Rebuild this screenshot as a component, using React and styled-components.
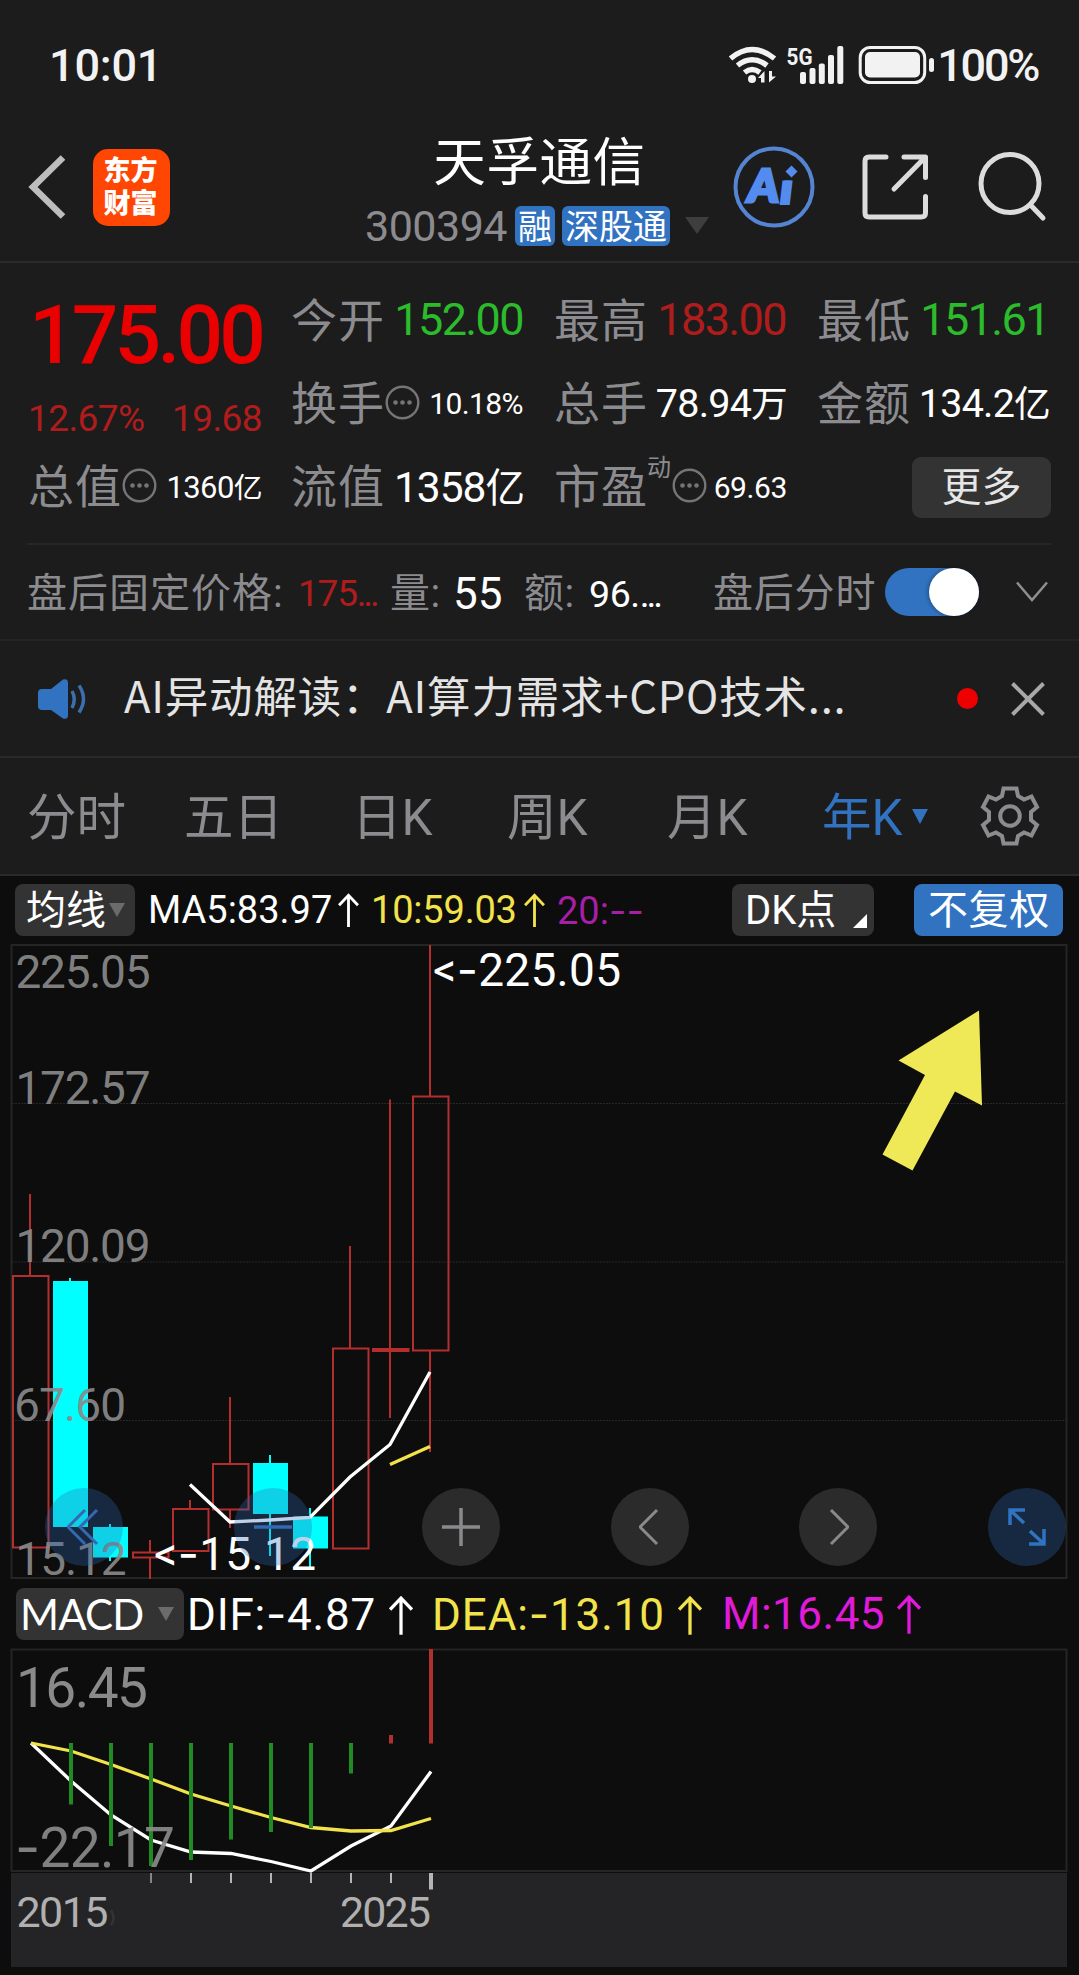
import React from "react";
import styled, { createGlobalStyle, css } from "styled-components";

const NUM = `Roboto, "Noto Sans CJK SC", sans-serif`;
const CJK = `"Noto Sans CJK SC", sans-serif`;
const GREY = "#8c8c90";
const RED = "#b01c1c";
const GREEN = "#2bbb2b";
const BLUE = "#3173c1";
const YELLOW = "#f2e34c";

const Global = createGlobalStyle`
  * { box-sizing: border-box; }
  body { margin: 0; background: #0d0d0d; }
`;

const Page = styled.main`
  width: 1079px;
  height: 1975px;
  overflow: hidden;
  background: #0d0d0d;
  font-family: ${NUM};
  color: #fff;
  white-space: nowrap;
`;

const Top = styled.div`
  background: #1c1c1c;
`;

/* ---------- status bar ---------- */
const StatusBar = styled.header`
  height: 130px;
  padding: 0 41px 0 49px;
  display: flex;
  align-items: center;
  justify-content: space-between;
  color: #f2f2f2;
`;
const StatusText = styled.span`
  font-size: 45px;
  line-height: 60px;
  margin-top: 2px;
  font-weight: 500;
  letter-spacing: ${(p) => p.$track}px;
`;
const StatusRight = styled.div`
  display: flex;
  align-items: center;
`;

/* ---------- title bar ---------- */
const TitleBar = styled.div`
  height: 133px;
  display: grid;
  grid-template-columns: 349px 381px 1fr;
  align-items: start;
  border-bottom: 2px solid #2a2a2b;
`;
const TitleSide = styled.div`
  height: 114px;
  display: flex;
  align-items: center;
  padding-left: ${(p) => p.$pad}px;
  gap: ${(p) => p.$gap}px;
`;
const AppLogo = styled.div`
  width: 77px;
  height: 77px;
  border-radius: 15px;
  background: #ff4602;
  font: 900 27px/33px ${CJK};
  padding: 3px 2px 0 0;
  text-align: center;
`;
const TitleCentre = styled.div`
  display: flex;
  flex-direction: column;
  align-items: center;
`;
const StockName = styled.h1`
  margin: 0;
  height: 62px;
  font: 400 52.5px/57px ${CJK};
  letter-spacing: 0.6px;
`;
const CodeRow = styled.div`
  height: 67px;
  display: flex;
  align-items: center;
  gap: 7px;
  margin-right: 5px;
`;
const Code = styled.span`
  font-size: 43px;
  line-height: 50px;
  color: ${GREY};
  letter-spacing: -0.5px;
  margin-right: 1px;
`;
const Tag = styled.span`
  height: 40px;
  padding: 0 3px;
  border-radius: 6px;
  background: ${BLUE};
  font: 400 34px/37px ${CJK};
`;
const Triangle = styled.i`
  width: 0;
  height: 0;
  border: solid transparent;
  border-width: ${(p) => p.$h}px ${(p) => p.$w / 2}px 0;
  border-top-color: ${(p) => p.$color};
  margin: ${(p) => p.$margin || 0};
`;

/* ---------- quote block ---------- */
const Quote = styled.section`
  height: 282px;
  margin: 0 27px;
  padding: 15px 0 0 1px;
  border-bottom: 2px solid #262627;
  display: grid;
  grid-template-columns: repeat(4, 235px);
  grid-template-rows: repeat(3, 83px);
  column-gap: 28px;
`;
const PriceBox = styled.div`
  grid-row: span 2;
  display: flex;
  flex-direction: column;
`;
const Price = styled.div`
  font-size: 82px;
  font-weight: 500;
  line-height: 100px;
  height: 100px;
  margin: 7px 0 0 1px;
  letter-spacing: -3.8px;
  color: #e90000;
`;
const Change = styled.div`
  display: flex;
  justify-content: space-between;
  font-size: 37px;
  line-height: 60px;
  margin-top: 4px;
  padding: 0 1px 0 0;
  letter-spacing: -0.6px;
  color: ${RED};
`;
const Cell = styled.div`
  display: flex;
  align-items: center;
  min-width: 0;
`;
const Label = styled.span`
  width: 93px;
  flex: none;
  font-size: 46px;
  line-height: 60px;
  margin-top: 2px;
  letter-spacing: 1px;
  color: ${GREY};
`;
const Sup = styled.span`
  font-size: 24px;
  line-height: 24px;
  color: ${GREY};
  margin: 0 0 35px 0;
`;
const Value = styled.span`
  margin: ${(p) => p.$drop || 0}px ${(p) => p.$inset ?? 1}px 0 auto;
  font-size: ${(p) => p.$size || 45}px;
  line-height: 60px;
  letter-spacing: ${(p) => p.$track ?? -1.6}px;
  color: ${(p) => p.$color || "#fff"};
`;
const Unit = styled.span`
  font-size: 0.93em;
`;
const MoreButton = styled.button`
  margin: 3px 1px 0 auto;
  width: 139px;
  height: 61px;
  border: 0;
  padding: 0 0 7px;
  border-radius: 9px;
  background: #333333;
  color: #e6e6e6;
  font: 400 40px/50px ${CJK};
`;

/* ---------- after hours ---------- */
const AfterHours = styled.section`
  height: 96px;
  padding: 0 31px 0 27px;
  display: flex;
  align-items: center;
  border-bottom: 2px solid #232324;
`;
const AhText = styled.span`
  width: ${(p) => p.$w}px;
  font-size: ${(p) => p.$size || 40}px;
  line-height: 60px;
  margin-top: 3px;
  letter-spacing: ${(p) => p.$track || 0}px;
  color: ${(p) => p.$color || GREY};
`;
const Ellipsis = styled.span`
  letter-spacing: -3.2px;
`;
const Toggle = styled.div`
  width: 94px;
  height: 48px;
  border-radius: 24px;
  background: ${BLUE};
  display: flex;
  justify-content: flex-end;
  align-items: center;
  margin-right: 37px;
`;
const Knob = styled.div`
  width: 50px;
  height: 48px;
  border-radius: 50%;
  background: #fff;
  box-shadow: -1px 0 4px rgba(0, 0, 0, 0.35);
`;

/* ---------- news ---------- */
const News = styled.section`
  height: 117px;
  padding: 0 34px 0 37px;
  display: flex;
  align-items: center;
  border-bottom: 2px solid #2a2a2b;
`;
const Headline = styled.span`
  margin: -8px auto 0 37px;
  font: 400 43.5px/60px ${CJK};
  letter-spacing: 0.8px;
  color: #e4e4e4;
`;
const Dot = styled.i`
  width: 21px;
  height: 21px;
  border-radius: 50%;
  background: #ee0000;
  margin-right: 33px;
`;

/* ---------- period tabs ---------- */
const Tabs = styled.nav`
  height: 118px;
  padding: 0 39px 0 27px;
  display: flex;
  align-items: center;
  border-bottom: 2px solid #2a2a2b;
`;
const Tab = styled.a`
  width: ${(p) => p.$w}px;
  display: flex;
  align-items: center;
  font-size: 49.5px;
  line-height: 60px;
  padding-top: 4px;
  color: ${(p) => (p.$active ? BLUE : GREY)};
`;

/* ---------- indicator rows ---------- */
const IndicatorRow = styled.div`
  height: ${(p) => p.$h}px;
  padding: ${(p) => p.$pad};
  display: flex;
  align-items: flex-start;
`;
const chip = css`
  display: flex;
  align-items: center;
  border-radius: 8px;
  flex: none;
`;
const Chip = styled.div`
  ${chip}
  width: ${(p) => p.$w}px;
  height: 52px;
  padding: 0 0 0 ${(p) => p.$pad}px;
  background: ${(p) => (p.$active ? BLUE : "#333333")};
  font-size: ${(p) => p.$size || 40}px;
  line-height: 51px;
  font-family: ${(p) => p.$font || NUM};
  letter-spacing: ${(p) => p.$track || 0}px;
  margin-left: ${(p) => p.$left || 0}px;
`;
const Corner = styled.i`
  width: 0;
  height: 0;
  border: solid transparent;
  border-width: 0 0 14px 14px;
  border-bottom-color: #fff;
  margin: 22px 0 0 auto;
`;
const Reading = styled.span`
  width: ${(p) => p.$w}px;
  flex: none;
  display: flex;
  align-items: center;
  justify-content: space-between;
  font-size: ${(p) => p.$size}px;
  line-height: 52px;
  letter-spacing: ${(p) => p.$track || 0}px;
  color: ${(p) => p.$color};
  margin-left: ${(p) => p.$left}px;
`;
const Dash = styled.span`
  font-family: Inter, sans-serif;
`;

/* ---------- charts ---------- */
const ChartBox = styled.section`
  position: relative;
  height: ${(p) => p.$h}px;
  svg {
    display: block;
  }
`;
const Controls = styled.div`
  position: absolute;
  left: 45px;
  right: 13px;
  bottom: 14px;
  display: flex;
  justify-content: space-between;
`;
const Round = styled.button`
  width: 78px;
  height: 78px;
  border: 0;
  padding: 0;
  border-radius: 50%;
  display: grid;
  place-items: center;
  background: ${(p) => (p.$blue ? "rgba(45,106,181,0.31)" : "#2b2b2b")};
`;
const AxisText = styled.text`
  font-family: ${NUM};
  font-size: ${(p) => p.$size || 46}px;
  fill: ${(p) => p.$fill || "#8a8a8a"};
`;
const DashSpan = styled.tspan`
  font-family: Inter, sans-serif;
`;

const CircleDots = () => (
  <svg width="36" height="36" viewBox="0 0 36 36" style={{ flex: "none" }}>
    <circle cx="18.500" cy="17.500" r="15.800" fill="none" stroke="#757578" strokeWidth="2.400" />
    {[11.5, 18.5, 25.5].map((x) => (
      <circle key={x} cx={x} cy="17.500" r="2.300" fill="#757578" />
    ))}
  </svg>
);

const UpArrow = ({ w, h }) => (
  <svg width={w} height={h} viewBox="0 0 22 36" fill="none" stroke="currentColor" strokeWidth="3">
    <path d="M11 36V3M1 13L11 2.500L21 13" />
  </svg>
);

const candles = [
  { x: 30, o: 1276, c: 1547.5, hi: 1194, lo: 1547, up: true },
  { x: 70, o: 1281, c: 1527, hi: 1278, lo: 1527 },
  { x: 110, o: 1527, c: 1557.5, hi: 1524, lo: 1561 },
  { x: 150, o: 1552.5, c: 1557.5, hi: 1540, lo: 1579, up: true },
  { x: 190, o: 1509, c: 1551, hi: 1500, lo: 1551, up: true },
  { x: 230, o: 1464, c: 1509.5, hi: 1397, lo: 1528, up: true },
  { x: 270, o: 1463, c: 1514, hi: 1455, lo: 1556 },
  { x: 310, o: 1516.5, c: 1548.5, hi: 1508, lo: 1568 },
  { x: 350, o: 1348.5, c: 1548.5, hi: 1246, lo: 1548, up: true },
  { x: 390, o: 1349, c: 1351, hi: 1099.5, lo: 1418, up: true },
  { x: 430, o: 1096.5, c: 1350.5, hi: 945, lo: 1452, up: true },
];

const Candle = ({ x, o, c, hi, lo, up }) =>
  up ? (
    <g stroke="#b52e2e" strokeWidth="2" fill="none">
      <path d={`M${x} ${hi}V${o}M${x} ${c}V${lo}`} />
      <rect x={x - 17} y={o} width="35.500" height={c - o} />
    </g>
  ) : (
    <g fill="#00ffff">
      <rect x={x - 1} y={hi} width="2" height={lo - hi} />
      <rect x={x - 17} y={o} width="35" height={c - o} />
    </g>
  );

const priceLabels = [
  ["225.05", 15.5, 988, 135],
  ["172.57", 15.5, 1103.5, 135],
  ["120.09", 15.5, 1262, 135],
  ["67.60", 14, 1421, 112],
  ["15.12", 15.5, 1574.5, 111],
];

const PriceChart = () => (
  <svg width="1079" height="640" viewBox="0 940 1079 640">
    <rect x="11.500" y="945" width="1055" height="633" fill="none" stroke="#252526" strokeWidth="2" />
    {[1103.5, 1262, 1420.5].map((y) => (
      <path key={y} d={`M12 ${y}H1066`} stroke="#272728" strokeWidth="1.200" strokeDasharray="2 1" />
    ))}
    {candles.map((k) => (
      <Candle key={k.x} {...k} />
    ))}
    <g fill="none" strokeWidth="3.300">
      <polyline stroke="#fff" points="190,1484.5 230,1522 270,1520 310,1517.5 350,1477 390,1444.5 430,1372" />
      <polyline stroke={YELLOW} points="390,1464.5 430,1446.5" />
    </g>
    {priceLabels.map(([t, x, y, w]) => (
      <AxisText key={t} x={x} y={y} textLength={w} fillOpacity="0.93">
        {t}
      </AxisText>
    ))}
    <AxisText x="433" y="986" $fill="#fff" textLength="188">{"<"}<DashSpan>-</DashSpan>225.05</AxisText>
    <AxisText x="154" y="1569.500" $fill="#fff" textLength="162">{"<"}<DashSpan>-</DashSpan>15.12</AxisText>
    <path d="M979 1010.500L982 1105.500L955 1091.500L912.500 1170.500L882.500 1154.500L925 1075L898.500 1060.500Z" fill="#efe957" />
  </svg>
);

const histogram = [
  [71, 1804.5], [111, 1846], [151, 1866], [191, 1860], [231, 1839.5],
  [271, 1832], [311, 1828], [351, 1773.5],
];

const MacdChart = () => (
  <svg width="1079" height="331" viewBox="0 1644 1079 331">
    <rect x="11.500" y="1649.500" width="1055" height="221.500" fill="none" stroke="#252526" strokeWidth="2" />
    <rect x="11" y="1873" width="1056" height="94" fill="#242426" />
    <AxisText x="16" y="1707" $size="55" textLength="132">16.45</AxisText>
    <g fill="none" strokeWidth="3.300">
      <polyline
        stroke="#fff"
        points="31,1743 71,1781 111,1815 151,1840 191,1852 231,1853.5 271,1861.5 311,1871 351,1846 391,1826 431,1771.5"
      />
      <polyline
        stroke={YELLOW}
        points="31,1743 71,1751 111,1764.5 151,1779 191,1794 231,1806 271,1817.5 311,1827.5 351,1831 391,1830.5 431,1818.5"
      />
    </g>
    {histogram.map(([x, y]) => (
      <rect key={x} x={x - 2} y="1743" width="4" height={y - 1743} fill="#228a22" />
    ))}
    <AxisText x="15" y="1867" $size="55" textLength="160" fillOpacity="0.93"><DashSpan>-</DashSpan>22.17</AxisText>
    <rect x="389" y="1735" width="4" height="8.500" fill="#b03030" />
    <rect x="429" y="1649" width="4" height="94.500" fill="#b03030" />
    {[151, 191, 231, 271, 311, 351, 391].map((x) => (
      <rect key={x} x={x - 1} y="1873" width="2" height="10" fill={x === 151 ? "#858587" : "#b4b4b4"} />
    ))}
    <rect x="429" y="1873" width="4" height="16.500" fill="#b4b4b4" />
    <AxisText x="16.500" y="1927" $size="43" $fill="#b0b0b0" textLength="92">2015</AxisText>
    <AxisText x="340" y="1927" $size="43" $fill="#b0b0b0" textLength="91">2025</AxisText>
    <path d="M111 1910q5 8 0 15" fill="none" stroke="#333335" strokeWidth="2.500" />
  </svg>
);

export default function App() {
  return (
    <Page>
      <Global />
      <Top>
        <StatusBar>
          <StatusText $track={-0.2}>10:01</StatusText>
          <StatusRight>
            <svg width="208" height="44" viewBox="729 43 208 44">
              <g fill="none" stroke="#f2f2f2" strokeWidth="5.400">
                <path d="M730.500 58.500Q752 40.500 774.500 58.500" />
                <path d="M737.500 65.500Q752 54 767 65.500" />
                <path d="M744.500 72.500Q752 66.500 760 72.500" />
              </g>
              <circle cx="752" cy="79" r="4" fill="#f2f2f2" />
              <path d="M764.500 71V82.500H761V78H758ZM769 71V82.500L776 76.500H772V71Z" fill="#f2f2f2" />
              <text x="786.500" y="65" fontSize="24" fontWeight="700" textLength="26" lengthAdjust="spacingAndGlyphs" fill="#f2f2f2" fontFamily="Roboto, sans-serif">5G</text>
              {[[800, 72], [809.5, 68], [818.8, 63.5], [828, 55], [837.3, 46]].map(([x, y]) => (
                <rect key={x} x={x} y={y} width="6" height={84 - y} rx="2" fill="#f2f2f2" />
              ))}
              <rect x="860.200" y="47.500" width="64.500" height="35" rx="10" fill="none" stroke="#f2f2f2" strokeWidth="3" />
              <rect x="865" y="52" width="55" height="25.500" rx="5" fill="#f2f2f2" />
              <rect x="929" y="58" width="5" height="14" rx="2.500" fill="#f2f2f2" />
            </svg>
            <StatusText $track={-2.3}>100%</StatusText>
          </StatusRight>
        </StatusBar>

        <TitleBar>
          <TitleSide $pad={28} $gap={27}>
            <svg width="38" height="66" viewBox="0 0 38 66" fill="none" stroke="#bdbdbd" strokeWidth="6.500">
              <path d="M35 3.500L5 33L35 62.500" />
            </svg>
            <AppLogo>东方<br />财富</AppLogo>
          </TitleSide>
          <TitleCentre>
            <StockName>天孚通信</StockName>
            <CodeRow>
              <Code>300394</Code>
              <Tag>融</Tag>
              <Tag>深股通</Tag>
              <Triangle $w={25} $h={17} $color="#3e3e3e" $margin="0 0 0 8px" />
            </CodeRow>
          </TitleCentre>
          <TitleSide $pad={2} $gap={0}>
            <svg width="318" height="84" viewBox="732 145.500 318 84">
              <defs>
                <clipPath id="stem"><rect x="776" y="181" width="30" height="30" /></clipPath>
              </defs>
              <circle cx="774" cy="187.500" r="38.500" fill="none" stroke="#5585d2" strokeWidth="4" />
              <g fill="#548bee" stroke="#548bee" fontFamily="Lato, sans-serif" fontWeight="900" fontStyle="italic">
                <text x="748" y="202" fontSize="45" textLength="31" lengthAdjust="spacingAndGlyphs" strokeWidth="3">A</text>
                <text x="781" y="203" fontSize="44" clipPath="url(#stem)" strokeWidth="4">i</text>
                <path d="M791.500 166L797.500 172L791.500 178L785.500 172Z" stroke="none" />
              </g>
              <g fill="none" stroke="#dcdcdc" strokeWidth="5" strokeLinecap="round" strokeLinejoin="round">
                <path d="M886 157.500H869Q865 157.500 865 161.500V213.500Q865 217.500 869 217.500H921Q925.500 217.500 925.500 213.500V197" />
                <path d="M904 157.500H925.500V178M925 158L894 189.500" />
                <circle cx="1010" cy="184" r="29" />
                <path d="M1030.500 205.500L1043 218.500" />
              </g>
            </svg>
          </TitleSide>
        </TitleBar>

        <Quote>
          <PriceBox>
            <Price>175.00</Price>
            <Change><span>12.67%</span><span>19.68</span></Change>
          </PriceBox>
          <Cell><Label>今开</Label><Value $color={GREEN} $inset={3}>152.00</Value></Cell>
          <Cell><Label>最高</Label><Value $color={RED} $inset={3}>183.00</Value></Cell>
          <Cell><Label>最低</Label><Value $color={GREEN} $inset={3}>151.61</Value></Cell>
          <Cell><Label>换手</Label><CircleDots /><Value $size={30} $track={-0.6} $inset={3} $drop={3}>10.18%</Value></Cell>
          <Cell><Label>总手</Label><Value $size={39.5} $track={-0.8} $inset={2} $drop={4}>78.94<Unit>万</Unit></Value></Cell>
          <Cell><Label>金额</Label><Value $size={39.5} $track={-0.8} $inset={2} $drop={4}>134.2<Unit>亿</Unit></Value></Cell>
          <Cell><Label>总值</Label><CircleDots /><Value $size={31} $track={-0.6} $drop={5}>1360<Unit>亿</Unit></Value></Cell>
          <Cell><Label>流值</Label><Value $size={42.5} $track={-1} $drop={5} $inset={2}>1358<Unit>亿</Unit></Value></Cell>
          <Cell><Label>市盈</Label><Sup>动</Sup><CircleDots /><Value $size={30} $track={-0.4} $drop={5} $inset={2}>69.63</Value></Cell>
          <Cell><MoreButton>更多</MoreButton></Cell>
        </Quote>

        <AfterHours>
          <AhText $w={271} $track={1}>盘后固定价格:</AhText>
          <AhText $w={92} $color={RED} $size={37} $track={-1.2}>175<Ellipsis>...</Ellipsis></AhText>
          <AhText $w={63} $track={0.6}>量:</AhText>
          <AhText $w={71} $color="#fff" $size={44}>55</AhText>
          <AhText $w={65} $track={0.6}>额:</AhText>
          <AhText $w={124} $color="#fff" $size={37.5} $track={-0.4}>96.<Ellipsis>...</Ellipsis></AhText>
          <AhText $w={172} $track={0.8}>盘后分时</AhText>
          <Toggle><Knob /></Toggle>
          <svg width="32" height="22" viewBox="0 0 32 22" fill="none" stroke="#8f8f92" strokeWidth="2.500">
            <path d="M1 1.500L16 19L31 1.500" />
          </svg>
        </AfterHours>

        <News>
          <svg width="50" height="40" viewBox="0 0 50 40">
            <path d="M5 10H14L26 0.500Q31 -1 31 4V36Q31 41 26 39.500L14 31H5Q1 31 1 27V14Q1 10 5 10Z" fill={BLUE} />
            <path d="M35 12Q39.500 20 35 29M42 6.500Q51 20 42 33.500" fill="none" stroke="#3a6fb0" strokeWidth="3.500" />
          </svg>
          <Headline>AI异动解读：AI算力需求+CPO技术...</Headline>
          <Dot />
          <svg width="34" height="34" viewBox="0 0 34 34" fill="none" stroke="#a8a8a8" strokeWidth="4">
            <path d="M1.500 1.500L32.500 32.500M32.500 1.500L1.500 32.500" />
          </svg>
        </News>

        <Tabs>
          <Tab $w={157}>分时</Tab>
          <Tab $w={168}>五日</Tab>
          <Tab $w={155}>日K</Tab>
          <Tab $w={160}>周K</Tab>
          <Tab $w={155}>月K</Tab>
          <Tab $w={158} $active>年K<Triangle $w={17} $h={15} $color={BLUE} $margin="0 0 4px 9px" /></Tab>
          <svg width="60" height="60" viewBox="-30 -30 60 60" fill="none" stroke={GREY} strokeWidth="4" strokeLinejoin="miter">
            <path d="M-6.500 -27.500H6.500L8 -20L14 -16.500L21.500 -19.500L27 -9L21 -4V4L27 9L21.500 19.500L14 16.500L8 20L6.500 27.500H-6.500L-8 20L-14 16.500L-21.500 19.500L-27 9L-21 4V-4L-27 -9L-21.500 -19.500L-14 -16.500L-8 -20Z" />
            <circle r="9.800" />
          </svg>
        </Tabs>
      </Top>

      <IndicatorRow $h={64} $pad="8px 16px 0 15px">
        <Chip $w={120} $pad={11}>均线<Triangle $w={16} $h={14} $color="#6b6b6b" $margin="0 0 0 3px" /></Chip>
        <Reading $w={211} $size={38} $color="#fff" $left={13}>MA5:83.97<UpArrow w={21} h={34} /></Reading>
        <Reading $w={174} $size={38} $color={YELLOW} $left={12} $track={-0.2}>10:59.03<UpArrow w={21} h={34} /></Reading>
        <Reading $w={90} $size={38} $color="#a61fa6" $left={12}><span>20:<Dash>--</Dash></span></Reading>
        <Chip $w={142} $pad={13} $left={85}>DK点<Corner style={{ marginRight: 7 }} /></Chip>
        <Chip $w={149} $pad={14} $left={40} $track={0.6} $active>不复权</Chip>
      </IndicatorRow>

      <ChartBox $h={640}>
        <PriceChart />
        <Controls>
          <Round $blue>
            <svg width="34" height="38" viewBox="0 0 34 38" fill="none" stroke="#3468b0" strokeWidth="3">
              <path d="M18 2L1 19L18 36M30 2L13 19L30 36" />
            </svg>
          </Round>
          <Round $blue>
            <svg width="38" height="38" viewBox="0 0 38 38" stroke="#3468b0" strokeWidth="3.500"><path d="M0 19H38" /></svg>
          </Round>
          <Round>
            <svg width="38" height="38" viewBox="0 0 38 38" stroke="#8a8a8d" strokeWidth="3.500"><path d="M0 19H38M19 0V38" /></svg>
          </Round>
          <Round>
            <svg width="22" height="38" viewBox="0 0 22 38" fill="none" stroke="#8a8a8d" strokeWidth="3"><path d="M18 2L1 19L18 36" /></svg>
          </Round>
          <Round>
            <svg width="22" height="38" viewBox="0 0 22 38" fill="none" stroke="#8a8a8d" strokeWidth="3"><path d="M4 2L21 19L4 36" /></svg>
          </Round>
          <Round $blue>
            <svg width="38" height="38" viewBox="0 0 38 38" fill="none" stroke="#3173c1" strokeWidth="3.500">
              <path d="M2 17V2H17M2 2L16 15M36 21V36H21M36 36L22 23" />
            </svg>
          </Round>
        </Controls>
      </ChartBox>

      <IndicatorRow $h={64} $pad="8px 16px 0 16px">
        <Chip $w={168} $pad={4} $size={42} $font="Lato, sans-serif" $track={-0.8}>MACD<Triangle $w={17} $h={14} $color="#6b6b6b" $margin="0 0 0 15px" /></Chip>
        <Reading $w={226} $size={44} $color="#fff" $left={3} $track={0.8}><span>DIF:<Dash>-</Dash>4.87</span><UpArrow w={24} h={40} /></Reading>
        <Reading $w={270} $size={44} $color={YELLOW} $left={19} $track={0.9}><span>DEA:<Dash>-</Dash>13.10</span><UpArrow w={24} h={40} /></Reading>
        <Reading $w={199} $size={44} $color="#e01ad8" $left={20} $track={0.5}>M:16.45<UpArrow w={24} h={40} /></Reading>
      </IndicatorRow>

      <ChartBox $h={331}>
        <MacdChart />
      </ChartBox>
    </Page>
  );
}
